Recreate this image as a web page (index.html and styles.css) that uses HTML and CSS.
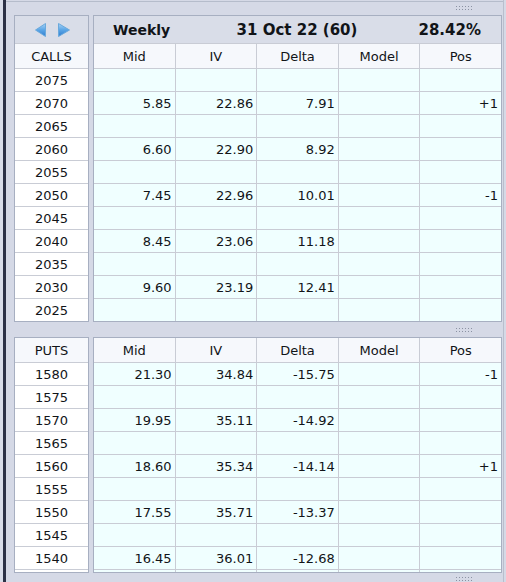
FILE: index.html
```html
<!DOCTYPE html>
<html>
<head>
<meta charset="utf-8">
<link rel="stylesheet" href="styles.css">
</head>
<body>
<div class="window">
  <div class="edge"></div>
  <div class="bar"></div>
  <div class="main">
    <div class="splitter first"><span class="grip"></span></div>

    <section class="panel">
      <div class="grid strikes calls">
        <div class="cell h1 arrows">
          <svg width="40" height="16" viewBox="0 0 40 16">
            <defs>
              <linearGradient id="ga" x1="0" y1="0" x2="0" y2="1">
                <stop offset="0" stop-color="#a9d3f5"/>
                <stop offset="0.5" stop-color="#5aa5e6"/>
                <stop offset="1" stop-color="#2f7dd0"/>
              </linearGradient>
            </defs>
            <polygon points="13.5,1.5 13.5,14.5 3.5,8" fill="url(#ga)" stroke="#6aa9dc" stroke-width="1"/>
            <polygon points="26.5,1.5 26.5,14.5 37.5,8" fill="url(#ga)" stroke="#6aa9dc" stroke-width="1"/>
          </svg>
        </div>
        <div class="cell h2">CALLS</div>
        <div class="cell s">2075</div>
        <div class="cell s">2070</div>
        <div class="cell s">2065</div>
        <div class="cell s">2060</div>
        <div class="cell s">2055</div>
        <div class="cell s">2050</div>
        <div class="cell s">2045</div>
        <div class="cell s">2040</div>
        <div class="cell s">2035</div>
        <div class="cell s">2030</div>
        <div class="cell s">2025</div>
      </div>
      <div class="grid values calls">
        <div class="cell h1 title">
          <span class="t-left">Weekly</span>
          <span class="t-mid">31 Oct 22 (60)</span>
          <span class="t-right">28.42%</span>
        </div>
        <div class="cell h2">Mid</div><div class="cell h2">IV</div><div class="cell h2">Delta</div><div class="cell h2">Model</div><div class="cell h2">Pos</div>

        <div class="cell c"></div><div class="cell c"></div><div class="cell c"></div><div class="cell c"></div><div class="cell c"></div>
        <div class="cell c">5.85</div><div class="cell c">22.86</div><div class="cell c">7.91</div><div class="cell c"></div><div class="cell c">+1</div>
        <div class="cell c"></div><div class="cell c"></div><div class="cell c"></div><div class="cell c"></div><div class="cell c"></div>
        <div class="cell c">6.60</div><div class="cell c">22.90</div><div class="cell c">8.92</div><div class="cell c"></div><div class="cell c"></div>
        <div class="cell c"></div><div class="cell c"></div><div class="cell c"></div><div class="cell c"></div><div class="cell c"></div>
        <div class="cell c">7.45</div><div class="cell c">22.96</div><div class="cell c">10.01</div><div class="cell c"></div><div class="cell c">-1</div>
        <div class="cell c"></div><div class="cell c"></div><div class="cell c"></div><div class="cell c"></div><div class="cell c"></div>
        <div class="cell c">8.45</div><div class="cell c">23.06</div><div class="cell c">11.18</div><div class="cell c"></div><div class="cell c"></div>
        <div class="cell c"></div><div class="cell c"></div><div class="cell c"></div><div class="cell c"></div><div class="cell c"></div>
        <div class="cell c">9.60</div><div class="cell c">23.19</div><div class="cell c">12.41</div><div class="cell c"></div><div class="cell c"></div>
        <div class="cell c"></div><div class="cell c"></div><div class="cell c"></div><div class="cell c"></div><div class="cell c"></div>
      </div>
    </section>

    <div class="splitter"><span class="grip"></span></div>

    <section class="panel">
      <div class="grid strikes puts">
        <div class="cell h2">PUTS</div>
        <div class="cell s">1580</div>
        <div class="cell s">1575</div>
        <div class="cell s">1570</div>
        <div class="cell s">1565</div>
        <div class="cell s">1560</div>
        <div class="cell s">1555</div>
        <div class="cell s">1550</div>
        <div class="cell s">1545</div>
        <div class="cell s">1540</div>
        <div class="cell s"></div>
      </div>
      <div class="grid values puts">
        <div class="cell h2">Mid</div><div class="cell h2">IV</div><div class="cell h2">Delta</div><div class="cell h2">Model</div><div class="cell h2">Pos</div>

        <div class="cell c">21.30</div><div class="cell c">34.84</div><div class="cell c">-15.75</div><div class="cell c"></div><div class="cell c">-1</div>
        <div class="cell c"></div><div class="cell c"></div><div class="cell c"></div><div class="cell c"></div><div class="cell c"></div>
        <div class="cell c">19.95</div><div class="cell c">35.11</div><div class="cell c">-14.92</div><div class="cell c"></div><div class="cell c"></div>
        <div class="cell c"></div><div class="cell c"></div><div class="cell c"></div><div class="cell c"></div><div class="cell c"></div>
        <div class="cell c">18.60</div><div class="cell c">35.34</div><div class="cell c">-14.14</div><div class="cell c"></div><div class="cell c">+1</div>
        <div class="cell c"></div><div class="cell c"></div><div class="cell c"></div><div class="cell c"></div><div class="cell c"></div>
        <div class="cell c">17.55</div><div class="cell c">35.71</div><div class="cell c">-13.37</div><div class="cell c"></div><div class="cell c"></div>
        <div class="cell c"></div><div class="cell c"></div><div class="cell c"></div><div class="cell c"></div><div class="cell c"></div>
        <div class="cell c">16.45</div><div class="cell c">36.01</div><div class="cell c">-12.68</div><div class="cell c"></div><div class="cell c"></div>
        <div class="cell c"></div><div class="cell c"></div><div class="cell c"></div><div class="cell c"></div><div class="cell c"></div>
      </div>
    </section>

    <div class="splitter last"><span class="grip"></span></div>
  </div>
  <div class="rline"></div>
  <div class="redge"></div>
</div>
</body>
</html>
```

FILE: styles.css
```css
html, body {
  margin: 0;
  padding: 0;
  background: #d5d9e6;
}
body {
  font-family: "DejaVu Sans", "Liberation Sans", sans-serif;
  font-size: 13px;
  color: #111418;
}
.window {
  display: flex;
  width: 506px;
  height: 582px;
  overflow: hidden;
}
.edge {
  width: 3px;
  background: #d9dde9;
}
.bar {
  width: 3px;
  background: #2c3146;
}
.main {
  flex: 1;
  display: flex;
  flex-direction: column;
  padding-left: 8px;
  padding-right: 1px;
  border-top: 1px solid #b5bccb;
  margin-top: 1px;
}
.rline {
  width: 1px;
  background: #b9bfcd;
}
.redge {
  width: 2px;
  background: #d5d9e6;
}
.splitter {
  height: 15px;
  position: relative;
}
.splitter.first {
  height: 13px;
}
.splitter.last {
  height: 9px;
}
.grip {
  position: absolute;
  right: 30px;
  top: 5px;
  width: 17px;
  height: 5px;
  background-image: radial-gradient(circle, #8b92a3 0.7px, transparent 0.8px);
  background-size: 3px 3px;
  background-position: 0 0;
}
.splitter.first .grip { top: 3px; }
.splitter.last .grip { top: 3px; }

.panel {
  display: flex;
  gap: 4px;
}
.grid {
  display: grid;
  gap: 1px;
  background: #c9ccd5;
  border: 1px solid #a7afc1;
  box-sizing: border-box;
  overflow: hidden;
  grid-auto-rows: 22px;
}
.strikes {
  width: 75px;
  grid-template-columns: 1fr;
}
.values {
  width: 409px;
  grid-template-columns: repeat(5, 1fr);
}
.calls {
  grid-template-rows: 27px 24px;
  height: 307px;
}
.puts {
  grid-template-rows: 24px;
  height: 236px;
}
.cell {
  display: flex;
  align-items: center;
  justify-content: flex-end;
  padding-right: 3px;
  white-space: nowrap;
  min-width: 0;
}
.h1 {
  background: #d9dde8;
}
.arrows {
  justify-content: center;
  padding: 0;
}
.arrows svg {
  display: block;
}
.title {
  grid-column: 1 / -1;
  display: grid;
  grid-template-columns: 1fr auto 1fr;
  padding: 0 20px 0 19px;
  font-weight: bold;
  font-size: 14px;
}
.t-left { justify-self: start; }
.t-mid { justify-self: center; font-size: 15px; }
.t-right { justify-self: end; font-size: 15px; }
.h2 {
  background: #f6f8fc;
  justify-content: center;
  padding: 0;
}
.c {
  background: #f0ffff;
}
.s {
  background: #ffffff;
  justify-content: center;
  padding: 0;
}
```
